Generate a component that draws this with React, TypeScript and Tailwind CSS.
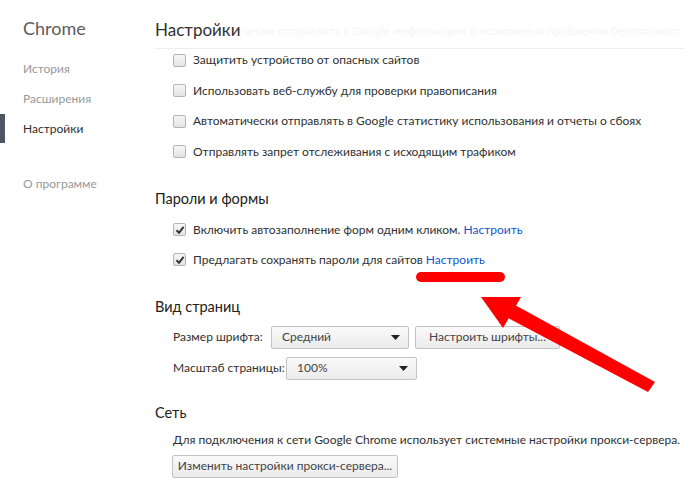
import React from "react";

const font = { fontFamily: 'Lato, "Noto Sans", Arial, sans-serif' };

type Row = { label: string; checked: boolean; link?: string };

const privacyRows: Row[] = [
  { label: "Защитить устройство от опасных сайтов", checked: false },
  { label: "Использовать веб-службу для проверки правописания", checked: false },
  {
    label: "Автоматически отправлять в Google статистику использования и отчеты о сбоях",
    checked: false,
  },
  { label: "Отправлять запрет отслеживания с исходящим трафиком", checked: false },
];

const passwordRows: Row[] = [
  { label: "Включить автозаполнение форм одним кликом.", checked: true, link: "Настроить" },
  { label: "Предлагать сохранять пароли для сайтов", checked: true, link: "Настроить" },
];

const Checkbox: React.FC<{ checked: boolean }> = ({ checked }) => (
  <div className="w-[13px] h-[13px] shrink-0 rounded-[2px] border border-[#b4b4b4] bg-gradient-to-b from-[#f6f6f6] to-[#e4e4e4] flex items-center justify-center">
    {checked && (
      <svg width="10" height="10" viewBox="0 0 10 10">
        <path d="M1.5 5.2 L4 7.8 L8.6 1.8" fill="none" stroke="#333" strokeWidth="2" />
      </svg>
    )}
  </div>
);

const CheckRow: React.FC<{ row: Row }> = ({ row }) => (
  <div className="flex items-center h-[22px] pl-[18px] gap-[7px] text-[12px] text-[#303030] whitespace-nowrap">
    <Checkbox checked={row.checked} />
    <span>
      {row.label}
      {row.link && <span className="text-[#1155cc]"> {row.link}</span>}
    </span>
  </div>
);

const Select: React.FC<{ value: string; width: string }> = ({ value, width }) => (
  <div
    className={`${width} h-[23px] shrink-0 flex items-center justify-between pl-[10px] pr-[8px] rounded-[2px] border border-[#c3c3c3] bg-gradient-to-b from-[#fafafa] to-[#ebebeb] text-[12px] text-[#444]`}
  >
    <span>{value}</span>
    <svg width="9" height="5" viewBox="0 0 9 5">
      <path d="M0 0 H9 L4.5 5 Z" fill="#222" />
    </svg>
  </div>
);

const Button: React.FC<{ children: React.ReactNode; width: string }> = ({ children, width }) => (
  <div
    className={`${width} h-[23px] shrink-0 flex items-center justify-center rounded-[2px] border border-[#c3c3c3] bg-gradient-to-b from-[#fafafa] to-[#ebebeb] text-[12px] text-[#444] whitespace-nowrap`}
  >
    {children}
  </div>
);

const SectionTitle: React.FC<{ children: React.ReactNode; className?: string }> = ({
  children,
  className,
}) => <div className={`h-[22px] leading-[22px] text-[14.5px] text-[#202020] ${className ?? ""}`}>{children}</div>;

export default function App() {
  return (
    <div className="relative w-[685px] h-[488px] overflow-hidden bg-white flex" style={font}>
      {/* sidebar */}
      <div className="w-[155px] shrink-0 pt-[14px]">
        <div className="pl-[23px] h-[28px] leading-[28px] text-[18px] text-[#5c5c5c]">Chrome</div>
        <div className="mt-[12px] flex flex-col text-[12px]">
          <div className="h-[30px] flex items-center pl-[23px] text-[#999]">История</div>
          <div className="h-[30px] flex items-center pl-[23px] text-[#999]">Расширения</div>
          <div className="h-[29px] flex items-center pl-[18px] border-l-[5px] border-[#4d5663] text-[#303030]">
            Настройки
          </div>
          <div className="mt-[26px] h-[30px] flex items-center pl-[23px] text-[#999]">О программе</div>
        </div>
      </div>

      {/* main */}
      <div className="flex-1 min-w-0">
        <div className="h-[49px] pt-[16px] border-b border-[#eeeeee] flex items-start whitespace-nowrap overflow-hidden">
          <span className="h-[28px] leading-[28px] text-[17px] text-[#303030]">Настройки</span>
          <span className="h-[28px] leading-[29px] text-[12px] text-[#f5f5f5] ml-[3px]">
            чески отправлять в Google информацию о возможных проблемах безопасност
          </span>
        </div>

        <div className="flex flex-col gap-[8.5px]">
          {privacyRows.map((r) => (
            <CheckRow key={r.label} row={r} />
          ))}
        </div>

        <SectionTitle className="mt-[25px]">Пароли и формы</SectionTitle>
        <div className="mt-[9px] flex flex-col gap-[8px]">
          {passwordRows.map((r) => (
            <CheckRow key={r.label} row={r} />
          ))}
        </div>

        <SectionTitle className="mt-[25px]">Вид страниц</SectionTitle>
        <div className="mt-[8px] pl-[18px] flex flex-col gap-[8px] text-[12px] text-[#303030] whitespace-nowrap">
          <div className="flex items-center">
            <span className="w-[98px] shrink-0">Размер шрифта:</span>
            <Select value="Средний" width="w-[138px]" />
            <div className="ml-[6px]">
              <Button width="w-[145px]">Настроить шрифты...</Button>
            </div>
          </div>
          <div className="flex items-center">
            <span className="w-[113px] shrink-0">Масштаб страницы:</span>
            <Select value="100%" width="w-[131px]" />
          </div>
        </div>

        <SectionTitle className="mt-[22px]">Сеть</SectionTitle>
        <div className="mt-[6px] pl-[18px] h-[20px] leading-[20px] text-[12px] text-[#303030] whitespace-nowrap">
          Для подключения к сети Google Chrome использует системные настройки прокси-сервера.
        </div>
        <div className="mt-[5px] pl-[17px]">
          <Button width="w-[226px]">Изменить настройки прокси-сервера...</Button>
        </div>
      </div>

      {/* red annotation */}
      <svg className="absolute inset-0 pointer-events-none" width="685" height="488" viewBox="0 0 685 488">
        <line x1="421" y1="277" x2="500" y2="277" stroke="#ff0000" strokeWidth="10" strokeLinecap="round" />
        <polygon points="481,297 521,297 503,328" fill="#ff0000" />
        <polygon points="515,305 655,382 648,392 506,317" fill="#ff0000" />
      </svg>
    </div>
  );
}
